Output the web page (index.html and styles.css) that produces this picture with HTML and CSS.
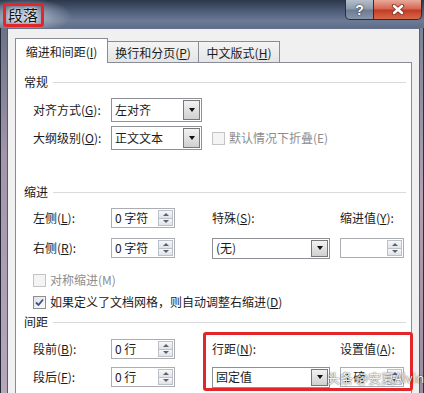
FILE: index.html
```html
<!DOCTYPE html>
<html lang="zh-CN">
<head>
    <meta charset="UTF-8">
    <title>段落</title>
    <link rel="stylesheet" href="styles.css">
</head>
<body>
    <div class="window">
        <div class="titlebar">
            <span class="titlebar__title">段落</span>
            <div class="titlebar__buttons">
                <div class="titlebar__btn titlebar__btn--help">?</div>
                <div class="titlebar__btn titlebar__btn--close">
                    <svg width="14" height="11" viewBox="0 0 14 11">
                        <path d="M3 2 L11 9 M11 2 L3 9" stroke="#7a2a1e" stroke-width="4.2" stroke-linecap="round"/>
                        <path d="M3 2 L11 9 M11 2 L3 9" stroke="#fff" stroke-width="2.6" stroke-linecap="round"/>
                    </svg>
                </div>
            </div>
        </div>

        <div class="frame">
            <div class="frame__side frame__side--left"></div>
            <div class="client">
                <div class="tabs">
                    <div class="tab tab--active">缩进和间距(<u>I</u>)</div>
                    <div class="tab tab--second">换行和分页(<u>P</u>)</div>
                    <div class="tab tab--third">中文版式(<u>H</u>)</div>
                </div>

                <div class="panel">
                    <div class="group group--general">常规</div>

                    <div class="row row--first">
                        <span class="label">对齐方式(<u>G</u>):</span>
                        <div class="select select--wide">
                            <span class="select__value">左对齐</span>
                            <span class="select__btn"></span>
                        </div>
                    </div>
                    <div class="row row--second">
                        <span class="label">大纲级别(<u>O</u>):</span>
                        <div class="select select--wide">
                            <span class="select__value">正文文本</span>
                            <span class="select__btn"></span>
                        </div>
                        <span class="check check--disabled check--after-select"></span>
                        <span class="check-label check-label--disabled">默认情况下折叠(E)</span>
                    </div>

                    <div class="group group--indent">缩进</div>

                    <div class="grid grid--indent">
                        <span class="label">左侧(<u>L</u>):</span>
                        <div class="spin">
                            <span class="spin__value">0 字符</span>
                            <span class="spin__btns"><span class="spin__btn spin__btn--up"></span><span class="spin__btn spin__btn--down"></span></span>
                        </div>
                        <span class="label">特殊(<u>S</u>):</span>
                        <span class="label">缩进值(<u>Y</u>):</span>

                        <span class="label">右侧(<u>R</u>):</span>
                        <div class="spin">
                            <span class="spin__value">0 字符</span>
                            <span class="spin__btns"><span class="spin__btn spin__btn--up"></span><span class="spin__btn spin__btn--down"></span></span>
                        </div>
                        <div class="select select--special">
                            <span class="select__value">(无)</span>
                            <span class="select__btn"></span>
                        </div>
                        <div class="spin">
                            <span class="spin__value"></span>
                            <span class="spin__btns"><span class="spin__btn spin__btn--up"></span><span class="spin__btn spin__btn--down"></span></span>
                        </div>
                    </div>

                    <div class="row row--check row--mirror">
                        <span class="check check--disabled"></span>
                        <span class="check-label check-label--disabled">对称缩进(M)</span>
                    </div>
                    <div class="row row--check row--grid">
                        <span class="check check--checked">
                            <svg width="9" height="9" viewBox="0 0 9 9"><path d="M1 4.5 L3.5 7 L8 1.5" fill="none" stroke="#3b4f8a" stroke-width="1.8"/></svg>
                        </span>
                        <span class="check-label">如果定义了文档网格，则自动调整右缩进(<u>D</u>)</span>
                    </div>

                    <div class="group group--spacing">间距</div>

                    <div class="grid grid--spacing">
                        <span class="label">段前(<u>B</u>):</span>
                        <div class="spin">
                            <span class="spin__value">0 行</span>
                            <span class="spin__btns"><span class="spin__btn spin__btn--up"></span><span class="spin__btn spin__btn--down"></span></span>
                        </div>
                        <span class="label">行距(<u>N</u>):</span>
                        <span class="label">设置值(<u>A</u>):</span>

                        <span class="label">段后(<u>F</u>):</span>
                        <div class="spin">
                            <span class="spin__value">0 行</span>
                            <span class="spin__btns"><span class="spin__btn spin__btn--up"></span><span class="spin__btn spin__btn--down"></span></span>
                        </div>
                        <div class="select select--special">
                            <span class="select__value">固定值</span>
                            <span class="select__btn"></span>
                        </div>
                        <div class="spin">
                            <span class="spin__value">1 磅</span>
                            <span class="spin__btns"><span class="spin__btn spin__btn--up"></span><span class="spin__btn spin__btn--down"></span></span>
                        </div>
                    </div>
                </div>
            </div>
            <div class="frame__side frame__side--right"></div>
        </div>
    </div>

    <div class="mark mark--title"></div>
    <div class="mark mark--spacing"></div>
    <div class="watermark">头条 @安夏Alvin</div>
</body>
</html>
```

FILE: styles.css
```css
* {
    box-sizing: border-box;
}

body {
    margin: 0;
    width: 424px;
    height: 393px;
    overflow: hidden;
    position: relative;
    font-family: "Noto Sans CJK SC", "Noto Sans", sans-serif;
    font-size: 12px;
    line-height: 16px;
    color: #1b1b1b;
    background: #3a4457;
}

u {
    text-decoration: underline;
    text-underline-offset: 1px;
}

.window {
    display: flex;
    flex-direction: column;
    height: 393px;
}

/* barra de titulo estilo aero */
.titlebar {
    height: 28px;
    flex: none;
    display: flex;
    justify-content: space-between;
    align-items: flex-start;
    background:
        radial-gradient(ellipse 48px 18px at 24px 16px, rgba(214, 222, 234, 0.8), rgba(214, 222, 234, 0) 100%),
        linear-gradient(to bottom, #2c374b 0%, #4d5d78 40%, #6b7b95 75%, #5f6e88 100%);
}

.titlebar__title {
    margin: 5px 0 0 8px;
    font-size: 15px;
    line-height: 20px;
    color: #111;
    text-shadow: 0 0 4px rgba(255, 255, 255, 0.9), 0 0 2px rgba(255, 255, 255, 0.9);
}

.titlebar__buttons {
    display: flex;
    margin-right: 2px;
}

.titlebar__btn {
    height: 20px;
    border: 1px solid #262e3f;
    border-top: none;
    display: flex;
    align-items: center;
    justify-content: center;
    color: #fff;
}

.titlebar__btn--help {
    width: 29px;
    border-radius: 0 0 0 5px;
    font-family: "Liberation Sans", sans-serif;
    font-weight: bold;
    font-size: 14px;
    text-shadow: 0 0 2px #2a3344, 0 0 1px #2a3344;
    background: linear-gradient(to bottom, #b5bfcc 0%, #8c99ab 48%, #6c7b92 52%, #8995a8 100%);
}

.titlebar__btn--close {
    width: 49px;
    margin-left: -1px;
    border-radius: 0 0 5px 0;
    background: linear-gradient(to bottom, #eaa99b 0%, #d4644f 48%, #c13a22 52%, #d9694b 100%);
}

.frame {
    flex: 1;
    display: flex;
    min-height: 0;
}

.frame__side--left {
    width: 8px;
    border-left: 1px solid #222836;
    border-right: 1px solid #515b70;
    background: linear-gradient(to bottom, #6a7386 0%, #a495aa 35%, #b6a7ba 100%);
}

.frame__side--right {
    width: 5px;
    border-left: 1px solid #5a6275;
    border-right: 1px solid #2b3141;
    background: linear-gradient(to bottom, #7b8395 0%, #b1a1b5 45%, #9a8ca0 100%);
}

.client {
    flex: 1;
    background: #f0f0f0;
    border-top: 1px solid #66708a;
    padding: 9px 7px 0 7px;
    display: flex;
    flex-direction: column;
}

/* abas */
.tabs {
    display: flex;
    align-items: flex-end;
    height: 24px;
    flex: none;
    position: relative;
    z-index: 1;
}

.tab {
    height: 21px;
    margin-left: -1px;
    border: 1px solid #898c95;
    border-bottom: none;
    background: linear-gradient(to bottom, #f4f4f4, #e5e5e5);
    display: flex;
    align-items: center;
    justify-content: center;
    padding-top: 1px;
}

.tab--active {
    height: 25px;
    width: 93px;
    margin-left: 0;
    margin-bottom: -1px;
    padding-top: 2px;
    background: #fff;
    position: relative;
    z-index: 1;
}

.tab--second {
    width: 92px;
}

.tab--third {
    width: 82px;
}

.panel {
    flex: 1;
    background: #fff;
    border: 1px solid #898c95;
    border-bottom: none;
    padding: 0 5px 0 8px;
}

/* titulos de grupo com linha */
.group {
    display: flex;
    align-items: center;
    height: 16px;
}

.group::after {
    content: "";
    flex: 1;
    height: 1px;
    margin-left: 5px;
    background: #d8dadd;
}

.group--general {
    margin-top: 11px;
}

.group--indent {
    margin-top: 34px;
}

.group--spacing {
    margin-top: 4px;
}

.row {
    display: flex;
    align-items: center;
    padding-left: 9px;
}

.row--first {
    height: 24px;
    margin-top: 8px;
}

.row--second {
    height: 24px;
    margin-top: 4px;
}

.row--check {
    height: 16px;
}

.row--mirror {
    margin-top: 14px;
}

.row--grid {
    margin-top: 6px;
}

.label {
    white-space: nowrap;
}

.row .label {
    width: 78px;
    flex: none;
}

.grid {
    display: grid;
    grid-template-columns: 78px 101px 128px 65px;
    grid-template-rows: 20px 20px;
    align-items: center;
    padding-left: 9px;
}

.grid--indent {
    margin-top: 8px;
    row-gap: 10px;
}

.grid--spacing {
    margin-top: 9px;
    row-gap: 8px;
}

/* combobox */
.select {
    display: flex;
    align-items: center;
    background: #fff;
    border: 1px solid #8e9297;
}

.select--wide {
    width: 91px;
    height: 24px;
}

.select--special {
    width: 118px;
    height: 21px;
}

.select__value {
    flex: 1;
    padding-left: 3px;
}

.select__btn {
    width: 17px;
    align-self: stretch;
    margin: 1px;
    border: 1px solid #777;
    background: linear-gradient(to bottom, #f2f2f2, #d0d0d0);
    display: flex;
    align-items: center;
    justify-content: center;
}

.select__btn::before {
    content: "";
    border-left: 3.5px solid transparent;
    border-right: 3.5px solid transparent;
    border-top: 4px solid #111;
}

/* spinbox */
.spin {
    width: 64px;
    height: 20px;
    display: flex;
    align-items: center;
    background: #fff;
    border: 1px solid #abadb3;
}

.spin__value {
    flex: 1;
    padding-left: 3px;
}

.spin__btns {
    width: 15px;
    height: 16px;
    margin-right: 1px;
    display: flex;
    flex-direction: column;
}

.spin__btn {
    flex: 1;
    border: 1px solid #bcc1c9;
    background: linear-gradient(to bottom, #f6f7f9, #dfe3e8);
    display: flex;
    align-items: center;
    justify-content: center;
}

.spin__btn--down {
    border-top: none;
}

.spin__btn--up::before {
    content: "";
    border-left: 3px solid transparent;
    border-right: 3px solid transparent;
    border-bottom: 3px solid #5c636d;
}

.spin__btn--down::before {
    content: "";
    border-left: 3px solid transparent;
    border-right: 3px solid transparent;
    border-top: 3px solid #5c636d;
}

/* checkbox */
.check {
    width: 13px;
    height: 13px;
    flex: none;
    border: 1px solid #8e8f8f;
    background: linear-gradient(135deg, #e0e2e5, #fbfbfb);
    display: flex;
    align-items: center;
    justify-content: center;
}

.check--disabled {
    border-color: #c4c4c4;
    background: #f4f4f4;
}

.check--after-select {
    margin-left: 10px;
}

.check-label {
    margin-left: 4px;
    white-space: nowrap;
}

.check-label--disabled {
    color: #8d8d8d;
}

/* marcacoes vermelhas e marca d'agua por cima do print */
.mark {
    position: absolute;
    border: 3px solid #e3262a;
    border-radius: 3px;
}

.mark--title {
    left: 3px;
    top: 3px;
    width: 41px;
    height: 24px;
}

.mark--spacing {
    left: 203px;
    top: 332px;
    width: 210px;
    height: 59px;
}

.watermark {
    position: absolute;
    left: 327px;
    top: 369px;
    font-size: 13px;
    line-height: 18px;
    color: rgba(255, 255, 255, 0.92);
    text-shadow: 0 0 2px rgba(0, 0, 0, 0.55), 0 0 1px rgba(0, 0, 0, 0.5);
    white-space: nowrap;
}
```
